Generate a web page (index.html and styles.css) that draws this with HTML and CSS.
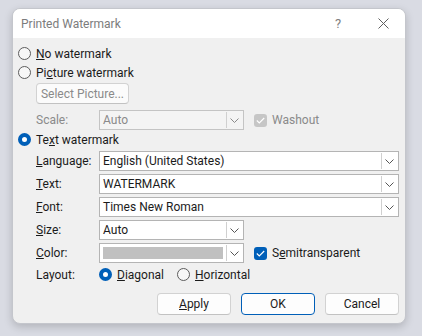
FILE: index.html
```html
<!DOCTYPE html>
<html lang="en">
<head>
  <meta charset="UTF-8" />
  <title>Printed Watermark</title>
  <link rel="stylesheet" href="styles.css">
</head>
<body>
  <div class="dialog">
    <div class="titlebar">
      <span class="title">Printed Watermark</span>
      <span class="help">?</span>
      <span class="close">
        <svg width="11" height="11" viewBox="0 0 11 11"><path d="M0.5 0.5 L10.5 10.5 M10.5 0.5 L0.5 10.5" stroke="#5f5f5f" stroke-width="1" fill="none"/></svg>
      </span>
    </div>

    <div class="content">
      <div class="radio-row">
        <span class="radio"></span>
        <span><u>N</u>o watermark</span>
      </div>
      <div class="radio-row">
        <span class="radio"></span>
        <span>Pi<u>c</u>ture watermark</span>
      </div>

      <div class="indent">
        <button class="btn btn-disabled btn-select">Select Picture...</button>
        <div class="field-row field-scale">
          <span class="label disabled">Scale:</span>
          <div class="combo combo-short combo-disabled">
            <span class="combo-value">Auto</span>
            <span class="combo-arrow"><svg width="9" height="5" viewBox="0 0 9 5"><path d="M0.5 0.5 L4.5 4.5 L8.5 0.5" stroke="#8a8a8a" fill="none"/></svg></span>
          </div>
          <span class="check check-disabled"><svg width="9" height="7" viewBox="0 0 9 7"><path d="M0.8 3.5 L3.3 6 L8.2 1" stroke="#fff" stroke-width="1.1" fill="none"/></svg></span>
          <span class="disabled">Washout</span>
        </div>
      </div>

      <div class="radio-row">
        <span class="radio radio-on"></span>
        <span>Te<u>x</u>t watermark</span>
      </div>

      <div class="indent">
        <div class="field-row field-first">
          <span class="label"><u>L</u>anguage:</span>
          <div class="combo combo-wide">
            <span class="combo-value">English (United States)</span>
            <span class="combo-arrow"><svg width="9" height="5" viewBox="0 0 9 5"><path d="M0.5 0.5 L4.5 4.5 L8.5 0.5" stroke="#555" fill="none"/></svg></span>
          </div>
        </div>
        <div class="field-row">
          <span class="label"><u>T</u>ext:</span>
          <div class="combo combo-wide">
            <span class="combo-value">WATERMARK</span>
            <span class="combo-arrow"><svg width="9" height="5" viewBox="0 0 9 5"><path d="M0.5 0.5 L4.5 4.5 L8.5 0.5" stroke="#555" fill="none"/></svg></span>
          </div>
        </div>
        <div class="field-row">
          <span class="label"><u>F</u>ont:</span>
          <div class="combo combo-wide">
            <span class="combo-value">Times New Roman</span>
            <span class="combo-arrow"><svg width="9" height="5" viewBox="0 0 9 5"><path d="M0.5 0.5 L4.5 4.5 L8.5 0.5" stroke="#555" fill="none"/></svg></span>
          </div>
        </div>
        <div class="field-row">
          <span class="label"><u>S</u>ize:</span>
          <div class="combo combo-short">
            <span class="combo-value">Auto</span>
            <span class="combo-arrow"><svg width="9" height="5" viewBox="0 0 9 5"><path d="M0.5 0.5 L4.5 4.5 L8.5 0.5" stroke="#555" fill="none"/></svg></span>
          </div>
        </div>
        <div class="field-row">
          <span class="label"><u>C</u>olor:</span>
          <div class="combo combo-short">
            <span class="swatch"></span>
            <span class="combo-arrow"><svg width="9" height="5" viewBox="0 0 9 5"><path d="M0.5 0.5 L4.5 4.5 L8.5 0.5" stroke="#555" fill="none"/></svg></span>
          </div>
          <span class="check"><svg width="9" height="7" viewBox="0 0 9 7"><path d="M0.8 3.5 L3.3 6 L8.2 1" stroke="#fff" stroke-width="1.1" fill="none"/></svg></span>
          <span>S<u>e</u>mitransparent</span>
        </div>
        <div class="field-row layout-row">
          <span class="label">Layout:</span>
          <span class="radio radio-on"></span>
          <span class="opt"><u>D</u>iagonal</span>
          <span class="radio"></span>
          <span class="opt"><u>H</u>orizontal</span>
        </div>
      </div>

      <div class="buttons">
        <button class="btn"><u>A</u>pply</button>
        <button class="btn btn-default">OK</button>
        <button class="btn">Cancel</button>
      </div>
    </div>
  </div>
</body>
</html>
```

FILE: styles.css
```css
body {
    margin: 0;
    width: 422px;
    height: 336px;
    overflow: hidden;
    background: #d9dbe3;
    font-family: Roboto, "Noto Sans", sans-serif;
    font-size: 12px;
    color: #1b1b1b;
}
.dialog {
    margin: 8px 0 0 12px;
    width: 392px;
    height: 314px;
    background-color: #f0f0f0;
    border: 1px solid #c4c6cc;
    border-radius: 8px;
    overflow: hidden;
    box-shadow: 0 3px 8px rgba(0, 0, 0, 0.18);
}
.titlebar {
    height: 29px;
    background: #fff;
    display: flex;
    align-items: center;
    padding-left: 8px;
}
.title {
    color: #7c7c7c;
    flex: 1;
}
.help {
    color: #808080;
    font-size: 13px;
    width: 12px;
    margin-right: 31px;
}
.close {
    display: flex;
    margin-right: 16px;
}
.content {
    padding: 6px 6px 0 5px;
}
.radio-row {
    height: 19px;
    display: flex;
    align-items: center;
}
.radio {
    width: 11px;
    height: 11px;
    border: 1px solid #5c5c5c;
    border-radius: 50%;
    background: #f7f7f7;
    margin-right: 5px;
    flex-shrink: 0;
}
.radio-on {
    width: 5px;
    height: 5px;
    border: 4px solid #005fb8;
    background: #fff;
}
.indent {
    padding-left: 18px;
}
.btn {
    font-family: inherit;
    font-size: 12px;
    color: #1b1b1b;
    width: 74px;
    height: 22px;
    padding: 0;
    background: #fdfdfd;
    border: 1px solid #d2d2d2;
    border-bottom-color: #c2c2c2;
    border-radius: 4px;
}
.btn-select {
    width: 93px;
    height: 21px;
    margin-top: 1px;
}
.btn-disabled {
    color: #8a8a8a;
    background: #fbfbfb;
}
.btn-default {
    border: 1px solid #005fb8;
}
.field-row {
    display: flex;
    align-items: center;
    height: 20px;
    margin-top: 3px;
}
.field-scale {
    margin-top: 6px;
}
.field-first {
    margin-top: 2px;
}
.label {
    width: 63px;
    flex-shrink: 0;
}
.disabled {
    color: #8a8a8a;
}
.combo {
    height: 18px;
    border: 1px solid #b4b4b4;
    background: #fff;
    display: flex;
    align-items: center;
    box-sizing: content-box;
}
.combo-wide {
    width: 298px;
}
.combo-short {
    width: 143px;
}
.combo-disabled {
    background: #f4f4f4;
    border-color: #c4c4c4;
}
.combo-disabled .combo-value {
    color: #8a8a8a;
}
.combo-value {
    flex: 1;
    padding-left: 3px;
    white-space: nowrap;
    overflow: hidden;
}
.combo-arrow {
    width: 15px;
    height: 16px;
    border-left: 1px solid #d0d0d0;
    display: flex;
    align-items: center;
    justify-content: center;
    margin-right: 1px;
}
.swatch {
    flex: 1;
    height: 12px;
    margin: 0 3px;
    background: #c0c0c0;
}
.check {
    width: 13px;
    height: 13px;
    border-radius: 3px;
    background: #005fb8;
    margin: 0 5px 0 10px;
    display: flex;
    align-items: center;
    justify-content: center;
}
.check-disabled {
    background: #c6c6c6;
}
.layout-row {
    height: 19px;
    margin-top: 2px;
}
.layout-row .opt {
    margin-right: 13px;
}
.buttons {
    display: flex;
    justify-content: flex-end;
    gap: 10px;
    margin-top: 9px;
}
```
